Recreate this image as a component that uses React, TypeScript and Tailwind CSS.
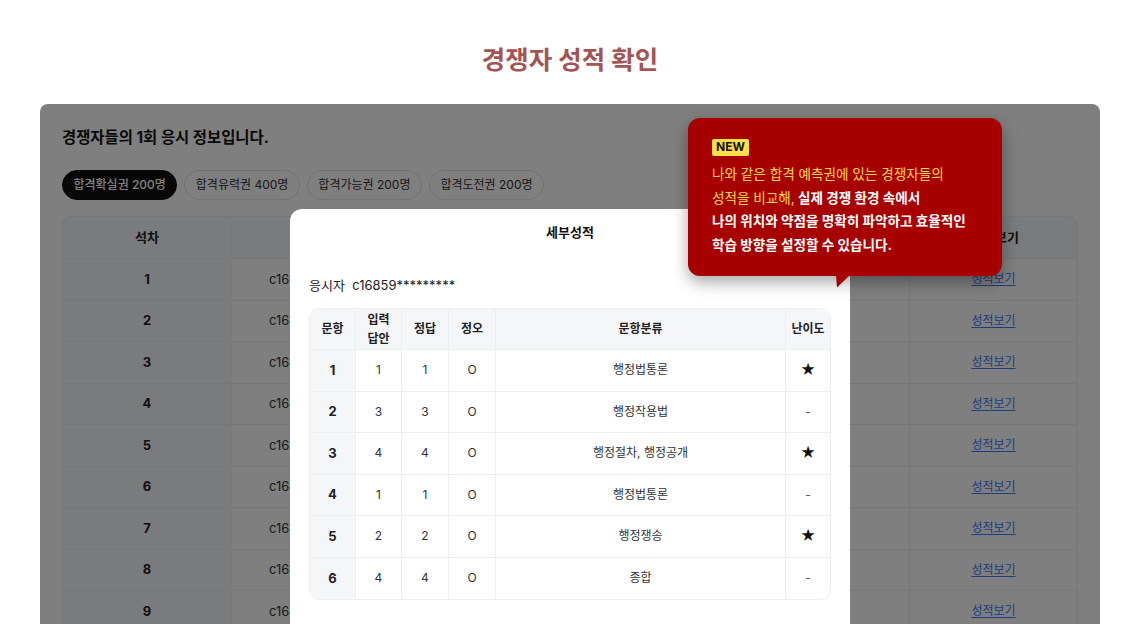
import type { ReactNode } from "react";

const TABS = ["합격확실권 200명", "합격유력권 400명", "합격가능권 200명", "합격도전권 200명"];

// Middle columns sit under the modal; only the first, second and last show.
const BG_COLS = [
  { label: "석차", w: "w-[168px]" },
  { label: "응시자", w: "w-[230px]" },
  { label: "", w: "w-[149px]" },
  { label: "", w: "w-[149px]" },
  { label: "", w: "w-[150px]" },
  { label: "성적 보기", w: "flex-1" },
];

const DETAIL = [
  { no: 1, input: 1, answer: 1, ox: "O", topic: "행정법통론", level: "★" },
  { no: 2, input: 3, answer: 3, ox: "O", topic: "행정작용법", level: "-" },
  { no: 3, input: 4, answer: 4, ox: "O", topic: "행정절차, 행정공개", level: "★" },
  { no: 4, input: 1, answer: 1, ox: "O", topic: "행정법통론", level: "-" },
  { no: 5, input: 2, answer: 2, ox: "O", topic: "행정쟁송", level: "★" },
  { no: 6, input: 4, answer: 4, ox: "O", topic: "종합", level: "-" },
];

const DETAIL_W = ["w-[45px]", "w-[46px]", "w-[47px]", "w-[47px]", "w-[290px]", "w-[45px]"];

function Cell({ className = "", children }: { className?: string; children?: ReactNode }) {
  return (
    <div className={`flex items-center justify-center text-center border-l border-[#eceef2] first:border-l-0 ${className}`}>
      {children}
    </div>
  );
}

function RankTable() {
  return (
    <div className="mt-[16px] rounded-t-[8px] border border-[#eceef2] overflow-hidden">
      <div className="flex h-[42px] bg-[#f5f6f8] border-b border-[#eceef2] text-[13px] font-bold text-[#222]">
        {BG_COLS.map((c, i) => (
          <Cell key={i} className={c.w}>
            {c.label}
          </Cell>
        ))}
      </div>
      {Array.from({ length: 9 }, (_, i) => i + 1).map((n) => (
        <div key={n} className="flex h-[41.5px] border-b border-[#eceef2] text-[13px] text-[#333]">
          <Cell className="w-[168px] bg-[#f5f6f8] font-bold text-[#222]">{n}</Cell>
          <Cell className="w-[230px] !justify-start pl-[37px]">c16859*********</Cell>
          <Cell className="w-[149px]" />
          <Cell className="w-[149px]" />
          <Cell className="w-[150px]" />
          <Cell className="flex-1">
            <span className="text-[12px] text-[#3d7bff] underline underline-offset-2">성적보기</span>
          </Cell>
        </div>
      ))}
    </div>
  );
}

function DetailModal() {
  return (
    <div className="absolute left-[250px] top-[105px] w-[560px] h-[440px] bg-white rounded-[12px] px-[19px] pt-[13px]">
      <div className="text-center text-[13px] font-bold text-[#111] leading-[20px]">세부성적</div>
      <div className="mt-[33px] text-[13px] text-[#222] leading-[20px]">
        응시자&nbsp; c16859*********
      </div>
      <div className="mt-[13px] border border-[#eceef2] rounded-[10px] overflow-hidden">
        <div className="flex h-[41px] bg-[#f5f6f8] border-b border-[#eceef2] text-[12px] font-bold text-[#222]">
          <Cell className={DETAIL_W[0]}>문항</Cell>
          <Cell className={`${DETAIL_W[1]} leading-[19px]`}>
            입력
            <br />
            답안
          </Cell>
          <Cell className={DETAIL_W[2]}>정답</Cell>
          <Cell className={DETAIL_W[3]}>정오</Cell>
          <Cell className={DETAIL_W[4]}>문항분류</Cell>
          <Cell className={DETAIL_W[5]}>난이도</Cell>
        </div>
        {DETAIL.map((r, i) => (
          <div
            key={r.no}
            className={`flex h-[41.5px] text-[12px] text-[#333] ${i < DETAIL.length - 1 ? "border-b border-[#eceef2]" : ""}`}
          >
            <Cell className={`${DETAIL_W[0]} bg-[#f5f6f8] font-bold text-[13px] text-[#222]`}>{r.no}</Cell>
            <Cell className={DETAIL_W[1]}>{r.input}</Cell>
            <Cell className={DETAIL_W[2]}>{r.answer}</Cell>
            <Cell className={DETAIL_W[3]}>{r.ox}</Cell>
            <Cell className={DETAIL_W[4]}>{r.topic}</Cell>
            <Cell className={`${DETAIL_W[5]} ${r.level === "★" ? "text-[15px] text-[#111]" : "text-[#555]"}`}>
              {r.level}
            </Cell>
          </div>
        ))}
      </div>
    </div>
  );
}

function NewTooltip() {
  return (
    <div className="absolute left-[648px] top-[14px] w-[314px] h-[158px] bg-[#a60000] rounded-[12px] px-[24px] pt-[15px] shadow-[0_6px_16px_rgba(0,0,0,0.35)]">
      <span className="inline-flex items-center h-[17px] px-[4px] rounded-[2px] bg-[#ffe047] text-[12px] font-bold text-[#111] leading-none">
        NEW
      </span>
      <div className="mt-[6px] text-[13.6px] leading-[23.5px] text-white font-bold">
        <span className="text-[#ffd84a] font-normal">나와 같은 합격 예측권에 있는 경쟁자들의</span>
        <br />
        <span className="text-[#ffd84a] font-normal">성적을 비교해,</span> 실제 경쟁 환경 속에서
        <br />
        나의 위치와 약점을 명확히 파악하고 효율적인
        <br />
        학습 방향을 설정할 수 있습니다.
      </div>
      <svg className="absolute left-[148px] top-[157px]" width="14" height="13" viewBox="0 0 14 13">
        <path d="M0 0 L14 0 L1 12.5 Z" fill="#a60000" />
      </svg>
    </div>
  );
}

export default function App() {
  return (
    <div className="w-full h-[624px] overflow-hidden bg-white font-[Inter,'Noto_Sans_CJK_KR',sans-serif]">
      <h1 className="pt-[44px] text-center text-[25.5px] leading-[32px] font-bold text-[#a35555]">
        경쟁자 성적 확인
      </h1>
      <div className="relative mx-[40px] mt-[28px] h-[600px] bg-white rounded-t-[8px] overflow-hidden px-[22px] pt-[24px]">
        <h2 className="text-[15.4px] leading-[20px] font-bold text-[#111]">경쟁자들의 1회 응시 정보입니다.</h2>
        <div className="mt-[22px] flex gap-[7px]">
          {TABS.map((t, i) => (
            <button
              key={t}
              type="button"
              className={`h-[30px] px-[10.5px] rounded-full text-[12px] border ${
                i === 0
                  ? "bg-[#111] border-[#111] text-white font-medium"
                  : "bg-white border-[#e2e3e6] text-[#333]"
              }`}
            >
              {t}
            </button>
          ))}
        </div>
        <RankTable />
        <div className="absolute inset-0 bg-black/50" />
        <DetailModal />
        <NewTooltip />
      </div>
    </div>
  );
}
